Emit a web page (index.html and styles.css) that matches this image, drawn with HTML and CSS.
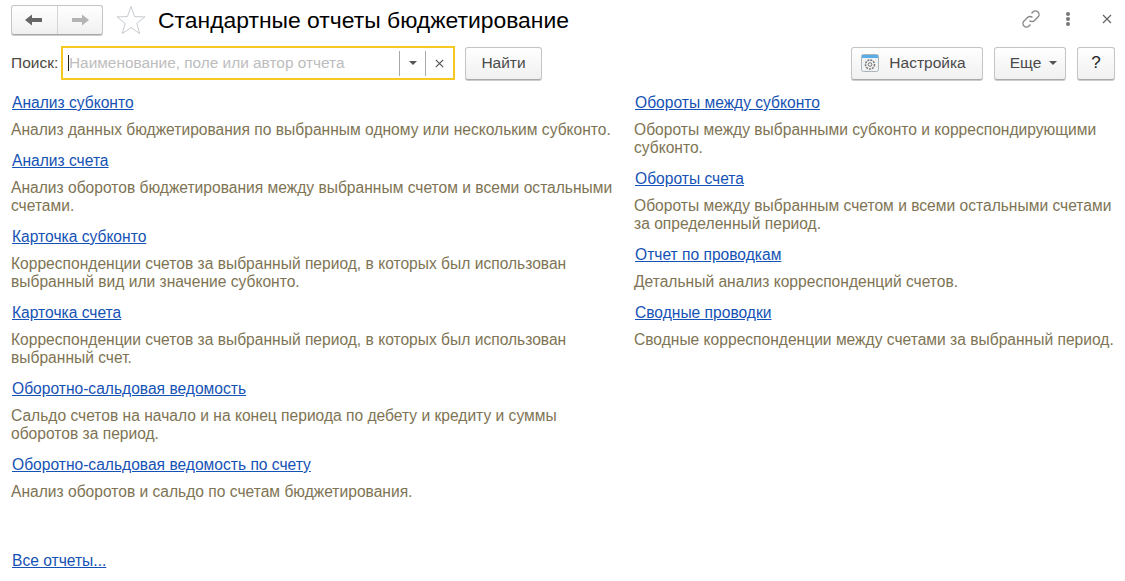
FILE: index.html
```html
<!DOCTYPE html>
<html lang="ru">
<head>
<meta charset="utf-8">
<title>Стандартные отчеты бюджетирование</title>
<link rel="stylesheet" href="styles.css">
</head>
<body>
<div class="page">
  <header class="head">
    <div class="nav">
      <button class="nav-btn"><svg width="18" height="12" viewBox="0 0 18 12"><path d="M0 6 7 0.5V4h10v4H7v3.5z" fill="#666"/></svg></button>
      <button class="nav-btn"><svg width="18" height="12" viewBox="0 0 18 12"><path d="M18 6 11 0.5V4H1v4h10v3.5z" fill="#b4b4b4"/></svg></button>
    </div>
    <svg class="star" width="30" height="30" viewBox="0 0 30 30"><path d="M15 1.5 18.6 11.6 29 11.9 20.8 18.4 23.7 28.6 15 22.6 6.3 28.6 9.2 18.4 1 11.9 11.4 11.6z" fill="#fff" stroke="#c6cacf" stroke-width="1"/></svg>
    <h1 class="title">Стандартные отчеты бюджетирование</h1>
    <div class="head-icons">
      <svg width="22" height="22" viewBox="0 0 22 22" fill="none" stroke="#8a8a8a" stroke-width="1.4"><path d="M9.5 12.5a3.5 3.5 0 0 0 5 0l3.5-3.5a3.5 3.5 0 0 0-5-5l-1.5 1.5"/><path d="M12.5 9.5a3.5 3.5 0 0 0-5 0L4 13a3.5 3.5 0 0 0 5 5l1.5-1.500"/></svg>
      <svg class="dots" width="6" height="16" viewBox="0 0 6 16" fill="#777"><circle cx="3" cy="3" r="2"/><circle cx="3" cy="8" r="2"/><circle cx="3" cy="13" r="2"/></svg>
      <svg class="close" width="10" height="10" viewBox="0 0 10 10" stroke="#666" stroke-width="1.300"><path d="M1 1l8 8M9 1l-8 8"/></svg>
    </div>
  </header>
  <div class="toolbar">
    <label class="search-label">Поиск:</label>
    <div class="search">
      <span class="caret"></span>
      <span class="placeholder">Наименование, поле или автор отчета</span>
      <span class="field-btn"><i class="tri"></i></span>
      <span class="field-btn wide"><svg width="9" height="9" viewBox="0 0 9 9" stroke="#555" stroke-width="1.200"><path d="M.8.8l7.400 7.400M8.200.8 .8 8.200"/></svg></span>
    </div>
    <button class="btn find">Найти</button>
    <div class="spacer"></div>
    <button class="btn setup"><svg width="18" height="18" viewBox="0 0 18 18"><rect x=".5" y=".5" width="17" height="17" rx="2" fill="#f2f2f2" stroke="#a9b4bd"/><path d="M1 1h16v3H1z" fill="#5aaee8"/><circle cx="9" cy="10.500" r="4.500" fill="none" stroke="#777" stroke-width="1.500" stroke-dasharray="2 1"/><circle cx="9" cy="10.500" r="1.800" fill="none" stroke="#777"/></svg>Настройка</button>
    <button class="btn more">Еще<i class="tri"></i></button>
    <button class="btn help">?</button>
  </div>
  <main class="cols">
    <section class="col">
      <a class="link" href="#">Анализ субконто</a>
      <p class="desc">Анализ данных бюджетирования по выбранным одному или нескольким субконто.</p>
      <a class="link" href="#">Анализ счета</a>
      <p class="desc">Анализ оборотов бюджетирования между выбранным счетом и всеми остальными счетами.</p>
      <a class="link" href="#">Карточка субконто</a>
      <p class="desc">Корреспонденции счетов за выбранный период, в которых был использован выбранный вид или значение субконто.</p>
      <a class="link" href="#">Карточка счета</a>
      <p class="desc">Корреспонденции счетов за выбранный период, в которых был использован выбранный счет.</p>
      <a class="link" href="#">Оборотно-сальдовая ведомость</a>
      <p class="desc">Сальдо счетов на начало и на конец периода по дебету и кредиту и суммы оборотов за период.</p>
      <a class="link" href="#">Оборотно-сальдовая ведомость по счету</a>
      <p class="desc">Анализ оборотов и сальдо по счетам бюджетирования.</p>
    </section>
    <section class="col">
      <a class="link" href="#">Обороты между субконто</a>
      <p class="desc">Обороты между выбранными субконто и корреспондирующими субконто.</p>
      <a class="link" href="#">Обороты счета</a>
      <p class="desc">Обороты между выбранным счетом и всеми остальными счетами за определенный период.</p>
      <a class="link" href="#">Отчет по проводкам</a>
      <p class="desc">Детальный анализ корреспонденций счетов.</p>
      <a class="link" href="#">Сводные проводки</a>
      <p class="desc">Сводные корреспонденции между счетами за выбранный период.</p>
    </section>
  </main>
  <footer class="foot"><a class="link" href="#">Все отчеты...</a></footer>
</div>
</body>
</html>
```
FILE: styles.css
```css
* { box-sizing: border-box; }
html, body { margin: 0; height: 100%; overflow: hidden; background: #fff; }
body { font-family: "Liberation Sans", Arial, sans-serif; font-size: 15.6px; color: #333; }
.page { height: 581px; display: flex; flex-direction: column; padding: 0 10px 0 11px; }
.head { height: 46px; flex: none; display: flex; align-items: center; padding-bottom: 1px; }
.nav { display: flex; width: 92px; height: 30px; border: 1px solid #c4c4c4; border-bottom-color: #a8a8a8; border-radius: 3px; background: linear-gradient(#fff, #f0f0f0); box-shadow: 0 1px 0 #ccc; margin-top: -5px; }
.nav-btn { flex: 1; border: 0; padding: 0; background: none; display: flex; align-items: center; justify-content: center; }
.nav-btn + .nav-btn { border-left: 1px solid #d4d4d4; }
.star { margin: -5px 0 0 13px; }
.title { margin: -5px 0 0 12px; font-size: 22.9px; font-weight: 400; color: #000; white-space: nowrap; }
.head-icons { margin-left: auto; display: flex; align-items: center; margin-top: -7px; }
.dots { margin-left: 23px; }
.close { margin: 0 3px 0 31px; }
.toolbar { height: 34px; flex: none; display: flex; align-items: center; }
.search-label { color: #4d4a40; font-size: 15.5px; width: 50px; white-space: nowrap; }
.search { width: 394px; height: 34px; border: 2px solid #f5c922; display: flex; align-items: center; padding-left: 5px; }
.caret { width: 1px; height: 16px; background: #222; flex: none; }
.placeholder { flex: 1; color: #bdbdbd; font-size: 15.4px; white-space: nowrap; }
.field-btn { width: 26px; height: 25px; border-left: 1px solid #a8a8a8; display: flex; align-items: center; justify-content: center; flex: none; }
.wide { width: 28px; }
.tri { display: inline-block; width: 0; height: 0; border: 4px solid transparent; border-top: 4px solid #555; border-bottom: 0; }
.btn { height: 33px; font: 15.5px "Liberation Sans", Arial, sans-serif; color: #4a4a4a; border: 1px solid #c4c4c4; border-bottom-color: #a8a8a8; border-radius: 3px; background: linear-gradient(#fff, #f0f0f0); box-shadow: 0 1px 0 #ccc; padding: 0; display: flex; align-items: center; justify-content: center; }
.find { width: 77px; margin-left: 10px; }
.spacer { flex: 1; }
.setup { width: 132px; gap: 10px; padding-right: 7px; }
.more { width: 72px; margin-left: 11px; gap: 8px; padding-left: 7px; }
.help { width: 38px; margin-left: 11px; color: #222; font-size: 17px; }
.cols { display: grid; grid-template-columns: 623px 1fr; padding-top: 14px; }
.link { display: block; width: fit-content; margin-left: 1px; color: #1552b5; line-height: 18px; text-decoration: underline; white-space: nowrap; }
.desc { margin: 9px 0 13px; color: #7e7454; line-height: 18px; }
.col { max-width: 610px; }
.col + .col { max-width: 481px; }
.foot { margin-top: auto; padding-bottom: 11px; }
```
